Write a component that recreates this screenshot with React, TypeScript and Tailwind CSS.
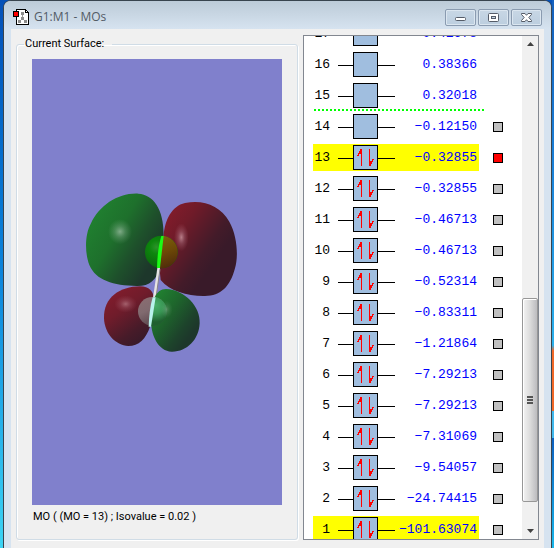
import { useState } from "react";

type Orbital = {
  n: number;
  energy: string;
  filled?: boolean;
  highlighted?: boolean;
  selectable?: boolean;
};

const ORBITALS: Orbital[] = [
  { n: 17, energy: "0.41678" },
  { n: 16, energy: "0.38366" },
  { n: 15, energy: "0.32018" },
  { n: 14, energy: "−0.12150", selectable: true },
  { n: 13, energy: "−0.32855", filled: true, highlighted: true, selectable: true },
  { n: 12, energy: "−0.32855", filled: true, selectable: true },
  { n: 11, energy: "−0.46713", filled: true, selectable: true },
  { n: 10, energy: "−0.46713", filled: true, selectable: true },
  { n: 9, energy: "−0.52314", filled: true, selectable: true },
  { n: 8, energy: "−0.83311", filled: true, selectable: true },
  { n: 7, energy: "−1.21864", filled: true, selectable: true },
  { n: 6, energy: "−7.29213", filled: true, selectable: true },
  { n: 5, energy: "−7.29213", filled: true, selectable: true },
  { n: 4, energy: "−7.31069", filled: true, selectable: true },
  { n: 3, energy: "−9.54057", filled: true, selectable: true },
  { n: 2, energy: "−24.74415", filled: true, selectable: true },
  { n: 1, energy: "−101.63074", filled: true, highlighted: true, selectable: true },
];

// orbitals above this one lie over the dotted zero line
const ZERO_LINE_AFTER = 15;

function AppIcon() {
  return (
    <svg width="17" height="17" viewBox="0 0 17 17" shapeRendering="crispEdges" aria-hidden>
      <path d="M3.5 0.5 H12.5 L15.5 3.5 V15.5 H3.5 Z" fill="#fff" stroke="#000" />
      <path d="M12.5 0.5 V3.5 H15.5" fill="none" stroke="#000" />
      <path d="M9.5 5 V10 M9.5 9.5 L6 13 M9.5 9.5 L13 13" fill="none" stroke="#999" />
      <path d="M8 3 h3 v3 h-3 z M8 8 h3 v3 h-3 z M5 11 h3 v3 h-3 z M11 11 h3 v3 h-3 z" fill="#8c8c8c" />
      <rect x="0" y="2" width="6" height="6" fill="#000" />
      <rect x="1" y="3" width="4" height="4" fill="#f00" />
    </svg>
  );
}

function CaptionButton({ label, children }: { label: string; children: React.ReactNode }) {
  return (
    <button
      type="button"
      aria-label={label}
      className="flex h-[17px] w-[31px] items-center justify-center rounded-xs border border-[#8a9bb0] bg-linear-to-b from-[#c8d7e5] to-[#bccedf] shadow-[inset_0_0_0_1px_#dbe6f0]"
    >
      <svg width="13" height="11" viewBox="0 0 13 11" aria-hidden>
        {children}
      </svg>
    </button>
  );
}

function TitleBar() {
  return (
    <header className="flex h-7 items-center gap-1 rounded-t-md bg-linear-to-b from-[#bccbd8] to-[#d6e3f0] pt-1 pr-[9px] pl-[9px]">
      <AppIcon />
      <h1 className="flex-1 font-['Open_Sans',sans-serif] text-xs text-[#525b66]">G1:M1 - MOs</h1>
      <div className="flex gap-[2px]">
        <CaptionButton label="Minimize">
          <rect x="1.5" y="5.5" width="10" height="3" rx="1" fill="#fff" stroke="#555c68" />
        </CaptionButton>
        <CaptionButton label="Maximize">
          <rect x="1.5" y="1.5" width="10" height="8" rx="1" fill="#fff" stroke="#555c68" />
          <rect x="4.5" y="4.5" width="4" height="2" fill="#c4d3e1" stroke="#555c68" />
        </CaptionButton>
        <CaptionButton label="Close">
          <path
            d="M1.5 1.5 H5 L6.5 3.3 L8 1.5 H11.5 V2.5 L8.8 5.5 L11.5 8.5 V9.5 H8 L6.5 7.7 L5 9.5 H1.5 V8.5 L4.2 5.5 L1.5 2.5 Z"
            fill="#fff"
            stroke="#555c68"
          />
        </CaptionButton>
      </div>
    </header>
  );
}

/** The rendered isosurface: four lobes, two atoms and the bond between them. */
function SurfaceView() {
  return (
    <svg
      viewBox="-114 -363 750 1338"
      className="block h-[446px] w-full bg-[#8080cc]"
      role="img"
      aria-label="Molecular orbital 13"
    >
      <defs>
        <linearGradient id="greenTop" x1="0.1" y1="0.2" x2="0.85" y2="0.75">
          <stop offset="0" stopColor="#208030" />
          <stop offset="0.4" stopColor="#1e702c" />
          <stop offset="0.7" stopColor="#1e502b" />
          <stop offset="1" stopColor="#1d372b" />
        </linearGradient>
        <linearGradient id="redTop" x1="0.05" y1="0.1" x2="0.7" y2="0.65">
          <stop offset="0" stopColor="#861c2b" />
          <stop offset="0.35" stopColor="#701b29" />
          <stop offset="0.8" stopColor="#431b29" />
          <stop offset="1" stopColor="#391a29" />
        </linearGradient>
        <linearGradient id="redLow" x1="0.2" y1="0" x2="0.75" y2="0.9">
          <stop offset="0" stopColor="#841c2c" />
          <stop offset="0.4" stopColor="#701c2b" />
          <stop offset="0.8" stopColor="#471b29" />
          <stop offset="1" stopColor="#3a1a29" />
        </linearGradient>
        <linearGradient id="greenLow" x1="0.1" y1="0.1" x2="0.8" y2="0.75">
          <stop offset="0" stopColor="#208030" />
          <stop offset="0.4" stopColor="#1e652c" />
          <stop offset="0.8" stopColor="#1d432b" />
          <stop offset="1" stopColor="#1d372b" />
        </linearGradient>
        <radialGradient id="shine">
          <stop offset="0" stopColor="#b4ccb8" stopOpacity="0.65" />
          <stop offset="0.45" stopColor="#a0c0a8" stopOpacity="0.3" />
          <stop offset="1" stopColor="#80b088" stopOpacity="0" />
        </radialGradient>
        <radialGradient id="shineRed">
          <stop offset="0" stopColor="#d8a8b0" stopOpacity="0.7" />
          <stop offset="0.45" stopColor="#c890a0" stopOpacity="0.3" />
          <stop offset="1" stopColor="#c07080" stopOpacity="0" />
        </radialGradient>
        <radialGradient id="atomGreen" cx="0.35" cy="0.35" r="0.7">
          <stop offset="0" stopColor="#2c922a" />
          <stop offset="0.3" stopColor="#0d860d" />
          <stop offset="1" stopColor="#0b5d0f" />
        </radialGradient>
        <linearGradient id="atomOlive" x1="0.4" y1="0" x2="0.8" y2="1">
          <stop offset="0" stopColor="#7b650b" />
          <stop offset="0.5" stopColor="#6d4907" />
          <stop offset="1" stopColor="#4d290b" />
        </linearGradient>
        <linearGradient id="atomGray" x1="0" y1="0" x2="0.5" y2="1">
          <stop offset="0" stopColor="#8c6e72" />
          <stop offset="0.5" stopColor="#806a6f" />
          <stop offset="1" stopColor="#5a444b" />
        </linearGradient>
        <radialGradient id="atomMint" gradientUnits="userSpaceOnUse" cx="256" cy="376" r="50">
          <stop offset="0" stopColor="#4aae6a" />
          <stop offset="0.5" stopColor="#389654" />
          <stop offset="1" stopColor="#1f602f" />
        </radialGradient>
        <clipPath id="rightOfBond">
          <path d="M278 150 H340 V280 H262 Z" />
        </clipPath>
        <clipPath id="lowerRight">
          <path d="M254 345 H300 V450 H236 Z" />
        </clipPath>
      </defs>

      <path
        d="M210 319 C238 320 250 334 251 354 L240 440 C228 476 206 498 175 498 C136 496 104 462 102 415 C100 352 150 320 210 319 Z"
        fill="url(#redLow)"
      />
      <ellipse cx="167" cy="372" rx="34" ry="26" fill="url(#shineRed)" opacity="0.7" />
      <path
        d="M205 41 C250 44 281 86 281 165 L270 258 C262 302 236 319 200 318 C130 316 78 302 58 255 C45 222 43 165 63 130 C88 76 145 38 205 41 Z"
        fill="url(#greenTop)"
      />
      <ellipse cx="150" cy="155" rx="36" ry="38" fill="url(#shine)" />
      <path
        d="M345 69 C400 58 450 76 478 125 C503 170 505 232 495 265 C480 322 450 350 400 348 C350 347 300 334 272 300 L268 262 L281 165 C285 120 305 78 345 69 Z"
        fill="url(#redTop)"
      />
      <ellipse cx="334" cy="172" rx="22" ry="42" fill="url(#shineRed)" />

      <circle cx="274" cy="216" r="49" fill="url(#atomGreen)" />
      <circle cx="274" cy="216" r="49" fill="url(#atomOlive)" clipPath="url(#rightOfBond)" />
      <path d="M274 168 H281 L270 264 H261 C262 230 265 196 274 168 Z" fill="#1cfb16" />
      <path d="M262 264 H270 L258 354 H249 Z" fill="#e6e4e4" />
      <path d="M270 268 L258 352" stroke="#8a8585" strokeWidth="3" />

      <path
        d="M288 327 C345 330 392 380 389 430 C387 480 350 516 305 515 C265 512 245 470 243 425 L255 350 C262 336 272 327 288 327 Z"
        fill="url(#greenLow)"
      />
      <circle cx="247" cy="394" r="43" fill="url(#atomGray)" />
      <circle cx="247" cy="394" r="44" fill="url(#atomMint)" clipPath="url(#lowerRight)" />
      <ellipse cx="290" cy="388" rx="18" ry="26" fill="url(#shine)" opacity="0.5" />
      <path d="M248 352 H257 L243 440 H236 C237 408 240 380 248 352 Z" fill="#b9f3ec" />
    </svg>
  );
}

function OrbitalBox({ filled }: { filled?: boolean }) {
  return (
    <svg width="57" height="27" viewBox="0 0 57 27" shapeRendering="crispEdges" aria-hidden>
      <path d="M0 14.5 H57" stroke="#000" />
      <rect x="15.5" y="1.5" width="24" height="24" fill="#a0bedf" stroke="#000" />
      {filled && (
        <>
          <path d="M23.5 5 V22 M31.5 5 V22" stroke="#f00" />
          <path d="M24 5 H22 V7 H21 V9 H20 V11 H19 V12 H21 V10 H24 Z" fill="#f00" />
          <path d="M31 22 H33 V20 H34 V18 H35 V16 H36 V15 H34 V17 H31 Z" fill="#f00" />
        </>
      )}
    </svg>
  );
}

function OrbitalList({ selected, onSelect }: { selected: number; onSelect: (n: number) => void }) {
  return (
    <ul className="-mt-4 flex flex-1 flex-col pl-[9px]">
      {ORBITALS.map((o) => (
        <li key={o.n} className="relative flex h-[31px] shrink-0 items-start">
          <div
            className={`flex h-[27px] w-[166px] items-center font-['Liberation_Mono',monospace] text-[13px] ${
              o.highlighted ? "bg-[#ffff00]" : ""
            }`}
          >
            <span className="w-[17px] text-right text-black">{o.n}</span>
            <span className="ml-2 shrink-0">
              <OrbitalBox filled={o.filled} />
            </span>
            <span className="w-[82px] text-right whitespace-nowrap text-[#0000ff]">{o.energy}</span>
          </div>
          {o.selectable && (
            <input
              type="checkbox"
              aria-label={`Orbital ${o.n}`}
              checked={selected === o.n}
              onChange={() => onSelect(o.n)}
              className="mt-[9px] ml-[14px] size-[10px] appearance-none border border-black bg-[#c0c0c0] checked:bg-[#ff0000]"
            />
          )}
          {o.n === ZERO_LINE_AFTER && (
            <div className="absolute bottom-[2px] left-px w-[170px] border-b-2 border-dotted border-[#00ff00]" />
          )}
        </li>
      ))}
    </ul>
  );
}

function ScrollBar() {
  return (
    <div className="flex w-4 shrink-0 flex-col bg-[#f0f0f0]">
      <button type="button" aria-label="Scroll up" className="flex h-4 items-center justify-center">
        <svg width="7" height="4" viewBox="0 0 7 4" aria-hidden>
          <path d="M0 4 L3.5 0 L7 4 Z" fill="#404040" />
        </svg>
      </button>
      <div className="flex-[247]" />
      <div className="flex flex-[203] flex-col items-center justify-center gap-px rounded-xs border border-[#979797] bg-linear-to-r from-[#f3f3f3] via-[#dcdcdc] to-[#bcbcbf] shadow-[inset_1px_1px_0_#ffffff]">
        <span className="h-[2px] w-[6px] bg-[#555]" />
        <span className="h-[2px] w-[6px] bg-[#555]" />
        <span className="h-[2px] w-[6px] bg-[#555]" />
      </div>
      <div className="flex-[21]" />
      <button type="button" aria-label="Scroll down" className="flex h-4 items-center justify-center">
        <svg width="7" height="4" viewBox="0 0 7 4" aria-hidden>
          <path d="M0 0 L3.5 4 L7 0 Z" fill="#404040" />
        </svg>
      </button>
    </div>
  );
}

export default function App() {
  const [selected, setSelected] = useState(13);

  return (
    <div className="flex min-h-screen bg-linear-to-b from-[#0450b8] via-[#0b84dc] to-[#3cd4f4] pl-[3px]">
      <div className="flex flex-1 flex-col rounded-t-lg border-x border-t border-[#38444e] bg-[#d6e3f0]">
        <TitleBar />
        <main className="mx-[7px] flex flex-1 items-start gap-[5px] bg-[#f0f0f0] px-[5px] pt-[6px] pb-2">
          <fieldset className="mt-px min-w-0 flex-1 rounded-[3px] border border-[#d0dce6] px-[15px] pb-[14px] font-['Roboto',sans-serif] text-[11px] text-black shadow-[inset_1px_1px_0_#fff,1px_1px_0_#fff]">
            <legend className="-ml-2 pr-2 pl-px leading-4">Current Surface:</legend>
            <div className="pt-[7px]">
              <SurfaceView />
            </div>
            <p className="mt-1 pl-px leading-4">MO ( (MO = 13) ; Isovalue = 0.02 )</p>
          </fieldset>
          <section
            aria-label="Orbital energies"
            className="flex max-h-[505px] w-[236px] shrink-0 overflow-hidden border border-[#828790] bg-white"
          >
            <OrbitalList selected={selected} onSelect={setSelected} />
            <ScrollBar />
          </section>
        </main>
      </div>
      {/* the strip of desktop wallpaper beside the window */}
      <div className="w-[2px] shrink-0 bg-[linear-gradient(#1460bc_0%,#1a80d8_30%,#2ab0ec_63%,#f06828_64%,#f06828_75%,#40b8ec_75%,#40b8ec_80%,#0c60c0_80%,#18b8ec_100%)]" />
    </div>
  );
}
